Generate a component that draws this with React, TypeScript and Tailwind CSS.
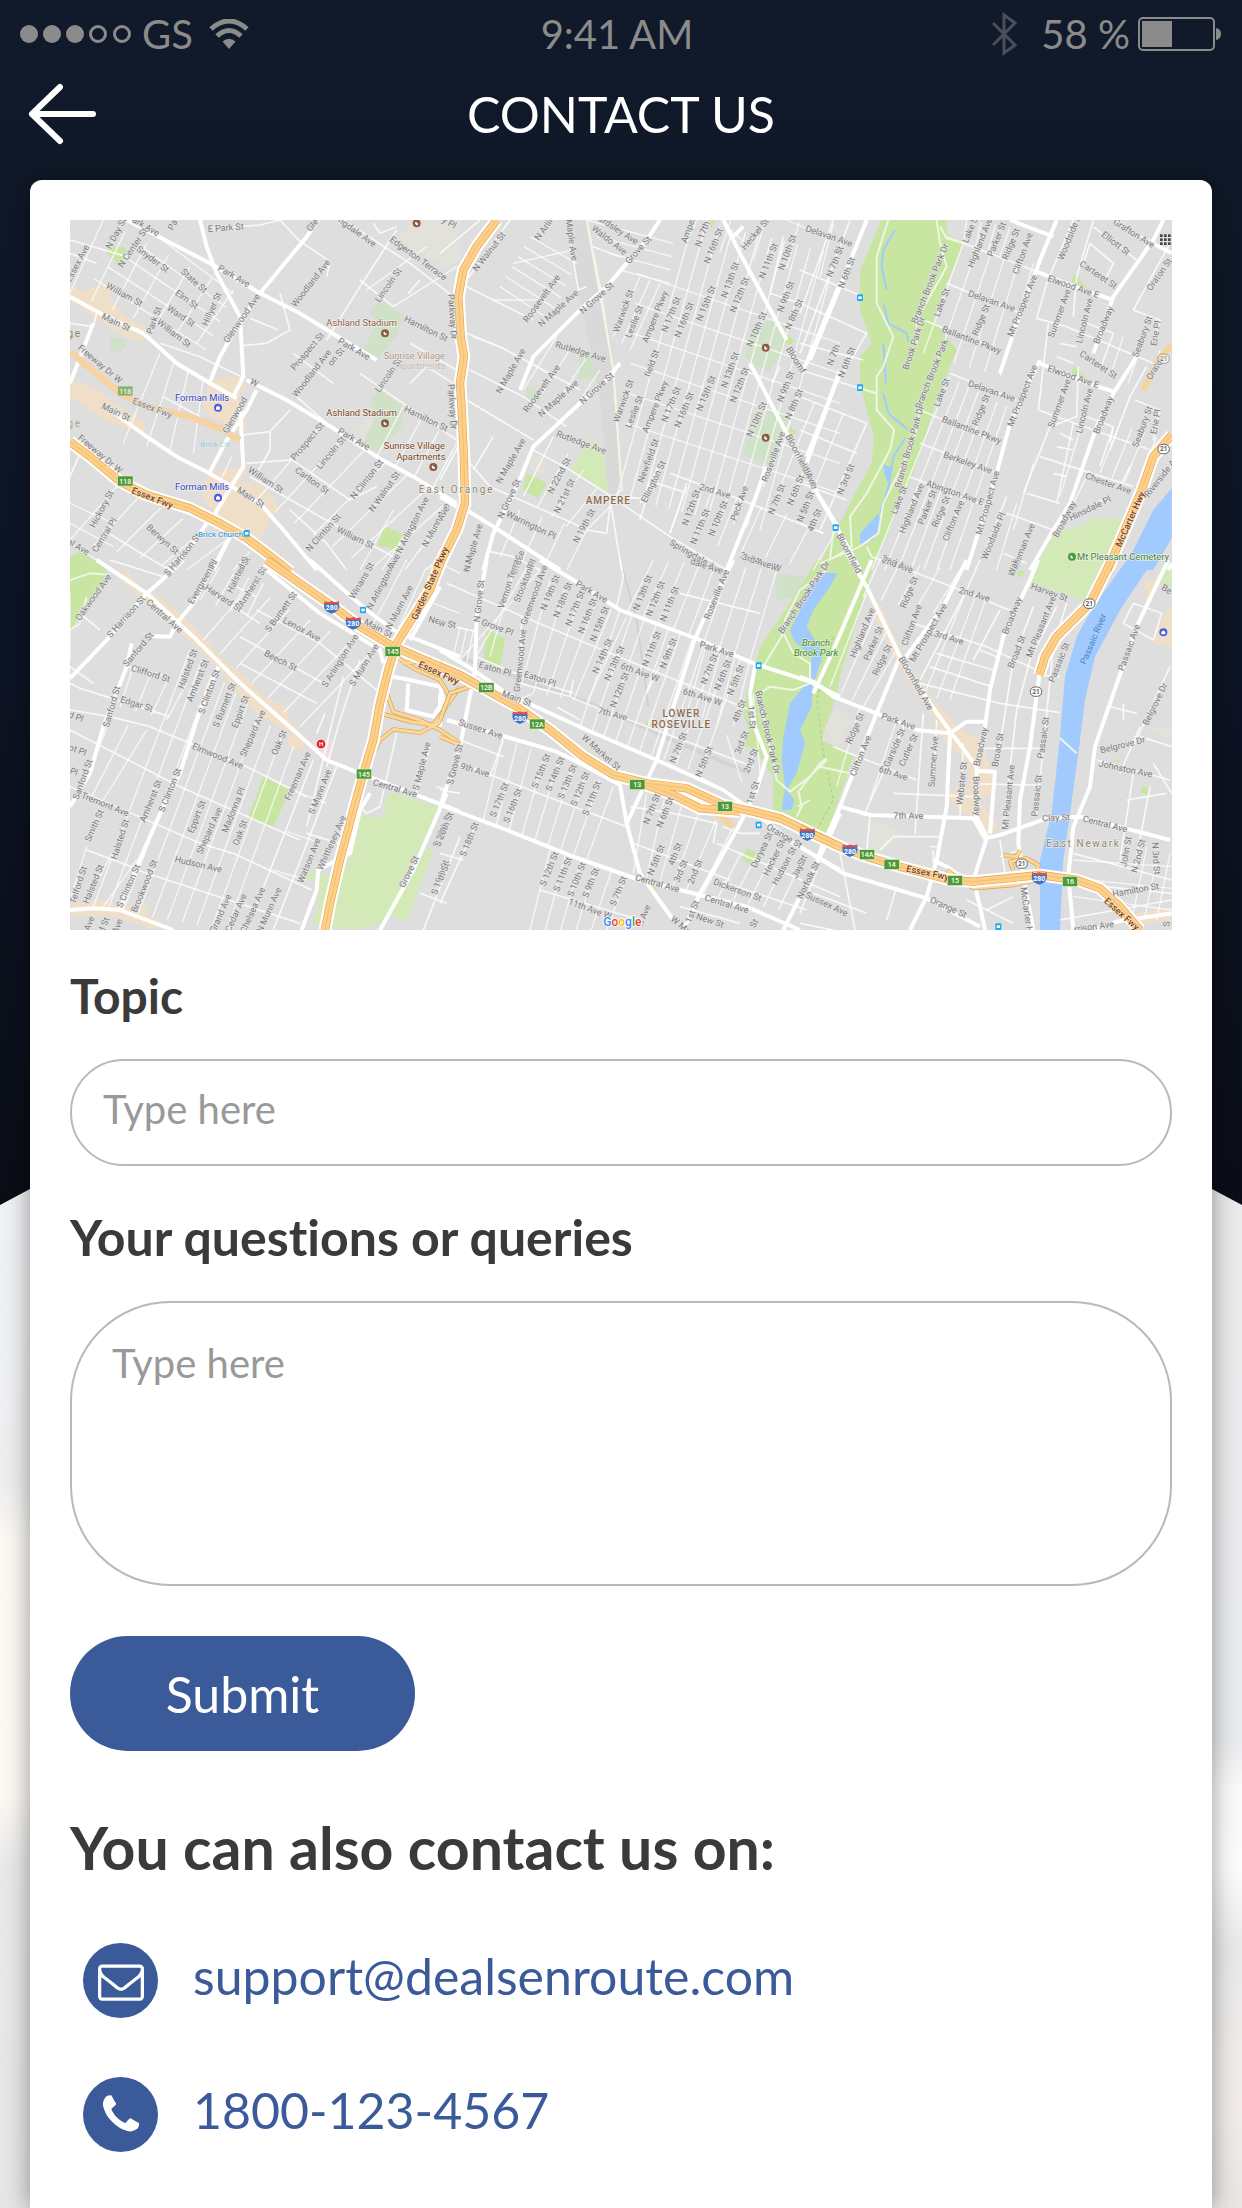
import React from "react";

type Tile = {
  at: [number, number];
  park?: string[];
  lawn?: string[];
  pale?: string[];
  sand?: string[];
  grey?: string[];
  water?: string[];
  stream?: string[];
  path?: string[];
  minor?: string[];
  grids?: number[][];
  major?: string[];
  ramp?: string[];
  faintHighway?: string[];
  highway?: string[];
  streets?: string;
};

const TILES: Tile[] = [
  {
    at: [-30, -30],
    park: ["145,112 195,112 200,130 180,165 140,130", "975,947 1032,975 1010,1030 985,1010 950,1010", "30,1040 60,1025 150,1080 30,1080"],
    pale: ["960,268 1035,320 1000,390 950,450 905,430 935,370 950,340 930,310", "955,538 1035,595 1025,650 950,725 905,705 935,645 950,610 930,580", "155,380 205,390 180,432 150,415"],
    grey: ["1060,30 1200,30 1200,150 1160,175 1010,90", "880,640 930,620 940,650 905,705 880,690"],
    sand: [
      "30,220 60,245 130,225 155,245 150,270 170,290 200,320 240,345 270,365 250,395 200,380 150,350 90,315 30,270",
      "440,785 500,780 560,770 540,820 600,820 660,890 600,985 555,970 470,915 425,860",
      "430,600 450,505 555,500 555,540 530,560 555,600 555,670 500,650",
      "30,510 100,530 180,590 260,640 250,670 150,640 30,560",
    ],
    minor: [
      "660,30 715,90 810,155 800,200", "450,55 600,45 660,30", "545,407 620,400 690,360", "570,325 655,360", "850,30 1050,160 1180,260",
      "1010,60 900,230 800,390", "1080,210 1045,250", "900,210 1000,290", "820,520 700,430", "545,675 630,665 690,600", "630,665 630,720 590,790",
      "690,745 870,870 950,830", "570,800 780,920 1000,1040", "560,760 690,750", "30,130 110,160", "30,90 200,140", "660,250 690,360", "30,800 60,730",
      "710,560 800,640", "900,490 1000,560 1190,690", "1190,480 1050,400", "300,400 420,440 545,500", "310,560 420,620", "130,960 260,1040 330,1080",
      "690,900 800,1000 860,1080", "940,40 960,70 1010,50", "1050,520 1100,470 1180,520", "30,340 100,350 110,310",
    ],
    grids: [
      [130, 30, 520, 240, 30, 250, 410, 400, 7], [100, 205, 280, 70, 440, 420, 520, 250, 5], [1190, 170, 1100, 110, 1000, 290, 920, 240, 2],
      [790, 640, 1170, 870, 590, 870, 930, 1080, 7], [170, 830, 500, 990, 30, 990, 380, 1080, 6], [300, 430, 430, 500, 190, 700, 400, 730, 4],
      [1030, 590, 1190, 700, 950, 740, 1120, 830, 4], [480, 720, 550, 760, 450, 790, 520, 820, 3], [30, 880, 30, 1000, 160, 940, 160, 1080, 3],
      [500, 990, 640, 1060, 450, 1080, 590, 1080, 3], [1000, 900, 1180, 1000, 900, 1080, 1100, 1080, 4],
    ],
    major: [
      "200,30 450,160 600,250 720,310 850,390 950,450", "420,30 440,110 470,190 540,320 550,500 520,560", "775,30 740,80 600,250 530,350 480,440 450,515",
      "30,260 130,315 250,370 350,460 450,520 530,565", "560,510 680,570 820,655 950,740 1060,800 1190,880", "540,590 550,770 510,835 460,920",
      "590,540 560,600 500,690 450,785", "150,600 260,680 350,740 440,785 600,880 670,960 770,1080", "440,940 400,1000 320,1080", "510,980 460,1080", "100,340 30,520",
    ],
    faintHighway: ["30,425 90,475 180,550 260,590 390,620 480,655 540,690"],
    highway: ["30,695 90,740 180,815 260,855 390,895 480,940 560,985 640,1045 690,1085"],
    streets: `N Day St 168 70 -62;Park Ave 250 45 30;Pa 338 45 -62;E Park St 497 53 -4;N Center St 218 113 -56;Snyder St 278 148 37;State St 402 212 42;Essex Ave 52 160 -62;William St 193 254 29;Elm St 380 268 36;Ward St 363 318 34;Hillyer St 455 297 -66;Main St 168 337 25;Park St 282 331 -70;William St 342 370 38;Park Ave 522 198 30;Glenwood Ave 545 325 -55;Woodland Ave 752 220 -52;Lincoln St 985 225 -55;Edgerton Terrace 1075 145 36;ngdale Ave 892 66 36;Gle 757 45 -50;Parkway Dr 1178 320 86;Hamilton St 1098 356 26;Park Ave 882 417 30;Prospect St 742 424 -50;Woodland Ave 755 490 -52;Lincoln St 985 495 -55;Freeway Dr W 120 462 40;Essex Fwy 277 594 21;Main St 168 606 25;Glenwood 525 615 -60;Parkway Dr 1175 590 86;Hamilton St 1098 626 26;Park Ave 882 687 30;Prospect St 742 694 -50;Lincoln St 813 728 -50;Freeway Dr W 120 732 40;Carlton St 756 812 36;William St 617 810 33;Main St 572 862 32;N Clinton St 920 808 -52;N Walnut St 973 845 -55;Hickory St 125 897 -62;Central Pl 133 975 -58;Berwyn St 308 988 42;S Harrison St 368 1035 -52;N Clinton St 790 968 -48;William St 886 983 26;N Arlington Ave 1057 945 -63;N Munn Ave 1127 945 -62;al Ave 55 1010 30;Pl 457 1066 -60;d St 552 1062 -60;Ave 998 1058 -62;W 583 518 30;on St 828 440 -50`,
  },
  {
    at: [1110, -30],
    park: ["260,790 320,820 295,865 250,840", "805,35 825,30 815,55", "1045,375 1065,395 1050,405 1035,395", "1040,645 1070,665 1055,680", "1090,785 1110,810 1085,805"],
    lawn: ["455,690 490,710 505,850 390,780"],
    pale: ["260,530 310,550 290,590 255,570", "420,430 490,440 480,500 415,510", "1010,330 1045,350 1040,400 985,490 915,440 935,345", "1005,600 1040,610 1035,660 985,765 910,735 935,610"],
    grey: ["0,60 50,110 20,160 0,170", "280,730 320,750 310,790 270,780"],
    path: ["440,30 520,480 545,840"],
    minor: [
      "440,30 480,230 520,480 545,840 510,870 545,1080", "440,230 415,240 380,30", "80,230 160,270 280,330", "210,30 80,210", "80,370 180,410 420,540",
      "90,480 250,560 380,650", "280,720 390,780 500,850 690,980 860,1080", "690,790 880,860 1150,970", "650,820 730,845", "90,760 150,830 400,940 440,960",
      "80,570 280,690", "160,680 100,780", "0,130 120,30", "545,860 600,865 650,820", "440,960 500,970 510,890", "690,970 740,830", "600,880 660,760", "600,930 640,800",
      "150,1025 220,1040 300,1080", "990,250 1030,80", "995,520 1020,470", "990,250 1080,280", "460,110 540,140", "0,810 60,700",
    ],
    grids: [
      [760, 30, 1190, 130, 530, 860, 960, 960, 12], [770, 30, 1180, 40, 740, 100, 1140, 200, 5], [590, 190, 560, 640, 1200, 400, 1200, 850, 6],
      [270, 80, 180, 230, 410, 160, 330, 330, 6], [400, 120, 200, 420, 220, 160, 100, 380, 3], [440, 30, 540, 180, 700, 100, 690, 220, 4],
      [350, 380, 480, 480, 250, 540, 400, 600, 4], [340, 680, 520, 880, 250, 860, 420, 980, 5], [740, 820, 1190, 960, 690, 970, 1120, 1080, 7],
      [600, 200, 660, 220, 520, 380, 570, 420, 3], [870, 60, 1040, 30, 930, 110, 1180, 90, 2], [180, 1040, 380, 1080, 240, 900, 440, 960, 4],
    ],
    major: [
      "660,30 620,90 500,230 430,290 280,440 240,540", "540,460 500,510 430,570 280,710 235,820 160,970 130,1080", "850,30 900,130 1040,390",
      "930,460 1040,670 1120,830 1190,945", "1200,220 1130,390 1090,480", "1200,480 1100,760", "980,770 940,880 860,1080", "80,900 160,950 360,1080", "0,860 50,890", "910,50 880,80",
    ],
    highway: ["170,30 110,110 70,180 55,260 62,380 72,440 60,520 65,600 72,750 75,880 50,960 -10,1080"],
    streets: `y Pl 28 38 30;N Walnut St 147 125 -52;N Arlin 313 55 -55;Maple Ave 395 90 82;ardsley Ave 535 60 33;Waldo Ave 508 90 38;Grove St 595 120 -48;Amper 745 60 -70;N 17th 787 72 -70;N 16th St 820 108 -68;Heckel St 945 72 -50;N 11th St 985 153 -68;N 10th St 1042 127 -70;Delavan A 1155 72 17;N 7th St 1182 155 -70;N 13th St 870 210 -70;N 12th St 898 255 -68;Roosevelt Ave 305 265 -54;N Maple Ave 355 295 -42;N Grove St 470 264 -42;Warwick St 550 303 -70;Leslie St 583 335 -68;Ampere Pkwy 645 320 -68;N 17th St 693 313 -68;N 16th St 732 330 -68;N 15th St 798 280 -68;N 9th St 1037 260 -68;N 8th St 1062 313 -66;N 10th St 950 358 -66;Parkway Dr 38 320 86;Rutledge Ave 422 425 17;N Maple Ave 212 483 -60;Roosevelt Ave 305 535 -54;N Maple Ave 355 565 -42;N Grove St 470 535 -42;Warwick St 550 573 -70;Leslie St 583 605 -68;Ampere Pkwy 645 590 -68;N 17th St 693 583 -68;N 16th St 732 600 -68;N 15th St 798 550 -68;N 13th St 870 480 -70;N 12th St 898 525 -68;N 9th St 1037 530 -68;N 8th St 1062 583 -66;N 10th St 950 628 -66;field St 635 460 -70;Bloomf 1068 450 58;Parkway Dr 38 590 86;Rutledge Ave 424 697 20;N Maple Ave 212 753 -60;N 22nd St 357 797 -62;N 21st St 373 858 -64;N Grove St 207 866 -65;Newfield St 625 752 -70;Ellington St 640 815 -64;Roseville Ave 1000 740 -70;Bloomfield Ave 1085 755 63;2nd Ave 825 843 17;N 12th St 753 893 -70;N 11th St 780 950 -68;N 10th St 834 925 -68;Peck Ave 898 880 -70;N 7th St 1010 868 -68;N 6th St 1067 840 -68;N 5th St 1094 890 -68;4th St 1125 930 -68;N 19th St 432 948 -62;Warrington Pl 273 945 26;Springdale Ave 768 1040 30;3rd Ave W 958 1055 20;N Maple Ave 98 1015 -74;Terrace 230 1065 -70;Pl 272 1066 -70;Ave 10 910 -62`,
  },
  {
    at: [2190, -30],
    park: [
      "245,30 180,180 180,300 215,400 180,440 180,520 200,600 222,680 215,760 160,860 50,1080 215,1080 340,790 410,570 470,420 400,330 440,220 490,100 440,70 440,30",
      "820,190 870,240 815,215", "820,465 870,515 815,490", "500,1080 505,1050 515,1080", "5,785 25,800 5,810",
    ],
    lawn: ["980,930 880,925 830,955 765,965 700,1080 910,1080"],
    water: ["1115,835 1060,900 970,1080 1060,1080 1115,985", "180,970 235,910 245,940 220,990 180,1002", "250,765 275,770 265,820 252,790"],
    stream: ["285,60 250,120 245,170 260,240", "250,280 265,340 320,370 325,395", "250,400 258,520", "250,550 265,610 325,660", "315,685 280,740 268,820 240,910"],
    path: [
      "265,30 230,140 230,280 280,380 250,470 230,500 230,600 283,660 270,720 200,850 150,920 155,1010 90,1050", "410,30 420,100 440,170 350,330 350,400",
      "360,590 345,680 320,740 250,880 235,970 180,1010 60,1060", "420,50 440,85 490,100", "100,960 90,1050",
    ],
    minor: [
      "440,80 710,185", "440,220 660,310", "370,330 600,420", "450,490 650,570", "360,600 600,700", "360,700 590,790", "330,800 560,890", "880,30 830,200 820,320",
      "820,30 740,220 710,325 800,350 1060,460", "715,600 880,660 1080,730", "850,160 870,100 940,160 910,220", "880,50 1010,150", "950,30 1040,90", "750,650 670,850",
      "820,640 770,880", "680,850 780,880", "720,740 1000,830", "620,910 760,960", "1000,300 1080,330 1060,400", "940,370 900,480", "1005,570 1080,600 1060,690",
      "940,650 900,770", "745,340 715,600", "835,470 830,620 750,650", "150,30 0,430", "100,30 0,310", "860,340 940,370", "860,620 940,650 930,700",
      "0,180 190,260", "0,280 200,370 130,490", "0,400 190,450", "0,480 230,550", "0,560 200,640 60,960", "0,660 170,730", "0,820 140,870", "0,940 70,970",
      "990,770 960,830", "780,400 830,410", "770,440 820,460", "780,670 820,690", "770,710 820,720", "760,790 800,800", "860,900 920,860", "610,1030 680,1060",
      "620,860 560,1010", "1040,470 990,560 930,720", "1110,100 1000,300", "200,1010 215,1040 330,1080",
    ],
    grids: [
      [490, 100, 700, 160, 370, 430, 600, 500, 6], [450, 500, 620, 590, 215, 1080, 450, 1080, 7], [0, 560, 130, 610, -110, 830, 20, 890, 4],
      [970, 380, 1080, 420, 930, 500, 1040, 540, 3], [960, 640, 1070, 680, 900, 790, 1010, 830, 4], [500, 30, 630, 50, 490, 100, 600, 140, 4],
      [700, 760, 650, 880, 640, 960, 590, 1080, 2], [840, 660, 870, 780, 780, 860, 820, 880, 2],
    ],
    major: [
      "770,30 720,150 640,370 600,490", "720,450 630,640 590,790 500,1080", "1090,30 1060,90 940,260 880,430", "1010,440 940,550 890,650 810,880 760,960 690,1080",
      "630,30 760,80", "710,185 850,240 940,270", "720,460 850,515 940,545", "1040,90 1115,130", "0,745 40,830 110,950 180,1080", "200,30 120,230 30,450", "120,490 20,740", "1115,1060 1105,1080",
    ],
    faintHighway: ["1115,405 1075,450 1030,540"],
    highway: ["1115,675 1060,740 1025,840 970,970 922,1080"],
    streets: `Delavan Ave 87 78 19;N 7th St 105 155 -68;N 6th St 140 188 -68;Lake S 510 60 -68;Highland Ave 540 98 -68;Parker St 590 88 -68;Ridge St 633 102 -68;Clifton Ave 668 130 -70;Woodside A 808 82 -68;Elliott St 947 100 38;Grafton Ave 1002 70 32;Oraton St 1078 193 -55;Carteret St 895 194 34;Elwood Ave E 820 230 19;Branch Brook Park Dr 390 220 -68;Lake St 425 277 -68;Delavan Ave 575 273 19;Ridge St 543 330 -68;Mt Prospect Ave 667 287 -68;Summer Ave 778 310 -70;Lincoln Ave 853 332 -76;Broadway 910 345 -68;Seabury St 1027 380 -70;Erie Pl 1067 370 -80;Ballantine Pkwy 515 390 21;Brook Park Dr 342 400 -72;N 7th 100 435 -70;N 6th St 140 457 -68;Branch Brook Park 395 492 -68;Lake St 425 547 -68;Delavan Ave 575 543 19;Ridge St 543 600 -68;Mt Prospect Ave 667 557 -68;Elwood Ave E 820 500 19;Carteret St 895 464 34;Summer Ave 778 580 -70;Lincoln Ave 853 602 -76;Broadway 910 615 -68;Seabury St 1027 650 -70;Erie Pl 1067 635 -80;Ballantine Pkwy 515 660 21;Branch Brook Park Dr 328 710 -74;Berkeley Ave 503 758 19;Chester Ave 925 820 19;Riverside A 1080 805 -52;Abington Ave E 465 848 19;Mt Prospect Ave 563 878 -74;Lake St 297 870 -68;Highland Ave 335 895 -68;Parker St 382 892 -68;Ridge St 423 905 -66;Clifton Ave 460 932 -68;Hinsdale Pl 870 895 -26;Broadway 793 928 -62;Woodside Pl 580 978 -68;Wakeman Ave 665 1020 -68;2nd Ave 292 1060 21;N 3rd St 137 808 -68;field Ave 20 782 62;N 5th St 17 890 -68;4th St 43 930 -68;Bloomfield 147 1030 62;Orator 1065 475 -58`,
  },
  {
    at: [-30, 1020],
    park: ["30,0 100,0 150,45 30,210", "610,650 690,690 640,800 565,770"],
    lawn: ["985,695 1140,740 970,1090 880,1110 755,1090 775,1040 775,950 725,965 750,930 810,950 860,920 900,765 965,775", "1100,855 1120,870 1040,1085 990,1065"],
    sand: [
      "160,40 200,35 250,90 300,110 370,170 440,240 480,290 560,350 610,410 680,440 690,480 740,540 720,575 680,560 690,520 620,480 570,440 500,360 440,290 350,210 250,120",
      "30,1030 120,1020 180,1035 260,1040 270,1070 295,1080 290,1110 230,1090 170,1070 30,1065",
    ],
    path: ["30,60 90,40 150,45", "80,110 60,190 30,210"],
    minor: [
      "590,150 780,250 950,390", "540,230 800,375", "440,90 600,190", "540,310 770,430", "150,0 310,50", "760,600 560,1110", "830,620 640,1110", "30,370 60,385 330,470",
      "30,450 150,470 270,500 560,620 740,710", "30,510 360,680 720,840", "30,320 100,370", "30,680 420,850 520,880 755,990", "80,870 240,930", "230,930 720,1090",
      "1010,520 960,740 920,760 900,740", "1110,560 1070,700", "850,350 740,800", "200,320 330,350", "60,160 120,210", "1130,680 1160,690", "740,820 870,860",
      "1080,1000 1160,1030", "1200,830 1090,1110", "590,110 530,80", "900,300 840,480 800,620", "795,460 770,520",
    ],
    grids: [
      [570, 80, 930, 280, 430, 240, 720, 500, 7], [390, 270, 700, 560, 100, 1040, 500, 1110, 10], [150, 480, 260, 510, 60, 700, 130, 720, 3],
      [30, 100, 200, 200, 30, 300, 60, 380, 1], [480, 20, 610, 70, 420, 120, 560, 170, 4], [1040, 0, 1100, 20, 930, 210, 1000, 240, 2],
      [220, 320, 380, 370, 180, 440, 320, 480, 4], [80, 860, 230, 900, 30, 1020, 130, 1040, 3], [720, 700, 640, 930, 800, 730, 740, 960, 3],
      [1120, 0, 1120, 130, 1200, 40, 1200, 160, 2],
    ],
    major: [
      "110,0 260,100 400,230 530,360 700,510 800,600 900,640 1200,755", "370,0 350,20 250,110 150,230 30,355", "470,0 400,130 350,190 330,230 270,228", "215,250 200,320 130,500 90,640 30,740",
      "475,320 420,450 360,640 310,740 230,920 180,1050", "30,1050 100,1045 180,1050 340,1110", "750,0 840,80 920,150 1000,210 1200,290", "620,30 780,160 960,270 970,310",
      "930,700 900,750 870,880 775,930 770,990 725,1110", "1160,700 1060,930 960,1110", "1140,80 1050,240", "1000,350 1050,360 1140,380 1150,420 1120,470 1040,450 1045,370", "1000,320 970,440 900,690",
    ],
    ramp: ["1010,290 1060,325 1140,360 1170,410 1135,490 1080,518 1000,508 960,540 930,600", "960,460 1050,485 1120,495 1165,430 1200,380", "980,400 1000,455 1080,480 1140,510 1200,550", "1030,310 1120,300 1200,340"],
    highway: ["1145,0 1110,90 1010,250 985,330 960,430 940,540 910,640 880,750 840,900 810,1030 795,1110", "620,0 720,70 820,140 900,200 1000,260 1200,345"],
    streets: `Oakwood Ave 100 112 -54;S Har 338 18 -50;S Harrison St 198 170 -48;Central Ave 313 168 42;Evergreen Pl 428 65 -60;Halsted S 533 45 -64;Amherst St 577 80 -58;Harvard St 490 115 33;Sanford St 235 268 -50;S Burnett St 663 155 -54;Lenox Ave 725 208 28;Main St 955 205 28;N Arlington Ave 970 65 -62;N Munn Ave 1018 142 -62;New St 1148 186 12;Winans St 905 62 -60;Beech St 662 302 27;S Arlington Ave 840 302 -58;S Munn Ave 912 315 -58;Clifford St 272 341 17;Halsted St 383 327 -70;Amherst St 413 362 -68;S Clinton St 447 395 -70;Edgar St 230 432 17;S Burnett St 493 435 -68;Eppirt St 541 455 -70;Sanford St 155 440 -74;Shepard Ave 578 520 -66;Oak St 657 548 -66;Elmwood Ave 473 588 22;d Pl 48 470 20;ot Pl 53 570 20;Pl 42 635 20;Sanford St 68 658 -70;Freeman Ave 713 648 -66;S Munn Ave 780 695 -68;Central Ave 1005 685 16;S Maple Ave 1085 618 -76;S Grove St 1182 615 -76;S Clinton St 330 690 -68;Tremont Ave 135 733 22;Amherst St 272 723 -68;Madonna Pl 520 750 -68;Eppirt St 410 770 -68;Shepard Ave 448 812 -66;Oak St 540 818 -70;Smith St 103 797 -66;Halsted St 180 838 -72;Hudson Ave 415 913 13;Watson Ave 747 902 -68;Whittlesey Ave 815 848 -66;S 20th St 1147 810 -68;Grove St 1047 935 -64;S 19th St 1140 952 -70;Telford St 55 975 -72;Halsted St 100 972 -68;S Clinton St 205 978 -66;Brookwood St 253 978 -68;Grand Ave 482 1060 -66;Cedar Ave 528 1058 -66;Chelsea Ave 578 1050 -66;N Munn Ave 627 1050 -66;Ave 88 1090 -68;d St 132 1095 -68;Ave 172 1098 -68`,
  },
  {
    at: [1110, 1020],
    park: [
      "1130,0 1030,160 960,260 945,320 920,400 910,460 945,570 1000,650 1000,760 1030,780 1160,825 1240,590 1145,540 1190,400 1200,350 1305,0",
      "140,210 195,235 180,330 130,300", "905,900 920,865 955,880 940,915", "620,480 630,500 615,500", "925,510 965,570 915,560", "620,965 650,985 640,1000",
    ],
    pale: ["1010,40 1095,50 1060,110 1010,120"],
    sand: ["725,655 775,680 740,700"],
    water: [
      "1110,80 1150,38 1192,40 1170,80 1120,150 1100,200 1150,280 1125,360 1110,350 1115,290 1060,240 1050,210 1080,150",
      "1100,370 1118,370 1115,440 1080,510 1095,550 1070,640 1040,690 1063,720 1055,750 1025,750 1035,680 1025,600 1030,530 1050,430",
    ],
    path: [
      "1160,30 1080,90 1035,180 1030,220 1060,280 1110,310 1110,365", "960,400 980,520 1010,660 1050,695 1110,650 1160,600", "960,400 990,380 1060,390 1110,370", "1075,690 1085,740 1070,770", "1030,220 970,320", "1075,740 1110,720",
    ],
    minor: [
      "20,70 250,170 560,300 930,450", "240,370 390,410 435,430 940,620", "720,100 960,160", "540,0 550,50 530,140", "40,200 110,215", "60,540 190,590", "60,610 560,800",
      "570,740 700,760 830,790 820,850", "580,850 870,960", "300,990 600,1080", "110,790 0,1030", "830,850 1200,1010", "830,960 1100,1050", "190,540 150,650", "350,440 420,480",
      "0,690 60,700", "0,880 70,900", "720,1040 900,1090", "245,170 240,380", "110,290 250,350 400,400", "960,820 900,820 850,800", "700,230 620,400", "390,410 400,360",
    ],
    grids: [
      [540, 150, 900, 300, 420, 500, 780, 640, 11], [330, 60, 560, 170, 240, 390, 440, 430, 6], [640, 0, 1010, 30, 560, 160, 930, 300, 9], [190, 530, 520, 680, 130, 780, 440, 900, 9],
      [620, 700, 880, 800, 580, 940, 780, 1000, 6], [330, 870, 560, 950, 270, 1110, 500, 1110, 6], [860, 870, 1130, 910, 790, 1000, 1060, 1060, 7], [230, 0, 300, 30, 150, 290, 60, 300, 3],
      [280, 400, 900, 680, 230, 420, 850, 720, 1], [780, 650, 940, 400, 850, 690, 960, 640, 3], [60, 200, 100, 210, 40, 290, 80, 310, 3], [800, 250, 930, 300, 740, 460, 880, 500, 4],
    ],
    major: [
      "140,0 110,170 105,330 60,560 0,740", "300,0 400,60 540,150 780,240 940,310 1110,365 1200,410", "880,0 790,180 760,250 700,440 650,600 560,790",
      "0,270 100,330 200,400 440,510 650,600 850,690 960,770 1060,850 1200,930", "20,480 180,525 350,575 440,620 540,675 560,790 600,940 700,1080",
      "0,735 200,810 400,890 600,960 780,1005 920,1040 1080,1110", "945,320 930,400 940,490 980,590 950,690 890,810 780,1000 730,1110", "1200,760 1150,870 1090,990 1030,1110", "0,500 0,400",
    ],
    ramp: ["0,480 30,400 90,380 140,390", "0,530 60,555", "60,350 100,355 140,385"],
    faintHighway: ["620,665 740,710 830,760 880,800", "0,310 60,340"],
    highway: ["0,320 60,345 140,390 230,440 330,510 430,590 520,645 620,670 740,685 850,735 940,755 1020,775 1200,860", "620,675 700,705 780,745 900,755"],
    streets: `N M 85 10 -80;Vernon Terrac 208 65 -72;Stockton Pl 255 62 -68;Greenwood Ave 282 105 -70;N 19th St 330 98 -68;N 18th St 368 120 -68;N 17th St 405 145 -68;N 16th St 442 168 -68;N 15th St 478 192 -68;Park Ave 455 95 30;N 13th St 608 98 -68;N 12th St 646 116 -68;N 11th St 688 132 -68;Roseville Ave 830 103 -68;dale Ave 800 18 18;3rd Ave W 965 8 18;N Grove St 117 123 -84;w St 22 192 8;Grove Pl 172 202 20;Greenwood Ave 240 302 -84;Eaton Pl 165 327 16;Eaton Pl 300 357 18;N 14th St 487 288 -66;N 13th St 523 310 -66;N 11th St 634 267 -68;N 9th St 685 280 -68;Park Ave 830 268 17;6th Ave W 600 337 20;N 12th St 538 390 -68;N 7th St 808 327 -68;N 6th St 848 345 -68;N 5th St 887 360 -68;6th Ave W 787 411 18;Main St 230 415 20;7th Ave 518 462 14;4th St 897 453 -68;1st St 935 472 86;3rd St 905 547 -68;2nd St 932 602 -68;Branch Brook Park Dr 983 517 77;Sussex Ave 122 507 18;W Market St 483 577 42;9th Ave 105 630 17;S Grove St 45 613 -76;S 15th St 303 633 -68;S 14th St 345 642 -68;S 13th St 382 665 -68;S 12th St 420 687 -68;S 11th St 455 715 -68;S 17th St 178 720 -68;S 16th St 218 737 -68;N 7th St 715 563 -68;N 5th St 792 605 -68;N 7th St 635 747 -68;N 6th St 675 757 -68;1st St 938 698 -72;S 20th St 12 808 -68;S 18th St 88 838 -68;S 12th St 328 927 -68;S 11th St 368 943 -68;S 10th St 410 958 -68;S 9th St 452 968 -68;S 7th St 535 993 -68;N 5th St 648 900 -68;4th St 705 882 -68;3rd St 722 933 -68;2nd St 765 935 -68;Central Ave 652 970 16;Orange St 1033 828 30;Duryea St 965 870 -64;Hecker St 1002 893 -64;Hudson St 1032 918 -62;Jay St 1078 920 -64;Norfolk St 1103 962 -62;Dickerson St 892 990 20;Central Ave 860 1032 17;Sussex Av 1155 1030 24;New St 810 1082 18;1st St 757 1055 -68;11th Ave W 450 1047 20;n Ave 612 1065 -68;W Ma 722 1095 40;St 942 1090 -60;th St 10 935 -68;Branch Brook Park Dr 1092 112 -56`,
  },
  {
    at: [2190, 1020],
    park: ["655,30 675,35 665,55 650,45", "1025,680 1045,682 1045,705 1025,700", "945,598 958,600 955,615"],
    lawn: ["725,0 690,70 820,110 870,130 935,0", "1090,0 1115,0 1115,80 1075,70"],
    grey: ["75,500 110,440 160,480 110,565", "210,780 320,820 250,870 200,880", "1030,500 1115,500 1110,540"],
    sand: [
      "235,120 250,160 310,290 400,420 470,500 555,545 560,600 580,640 580,700 540,720 595,800 570,830 540,830 510,770 440,720 450,690 510,680 500,600 430,540 400,470 330,370 260,250 215,150",
      "1060,220 1115,130 1115,260 1060,250", "1030,60 1080,60 1040,140", "960,1070 1115,1040 1115,1080 980,1095",
    ],
    water: ["980,0 880,140 830,230 795,350 780,530 755,760 720,900 720,1110 780,1110 790,900 810,760 835,580 855,420 885,290 960,150 1060,0"],
    path: ["0,350 50,370", "0,690 60,610 80,595", "60,620 150,640", "780,535 830,580"],
    minor: [
      "250,0 480,90 640,155", "340,190 560,260 720,335", "410,280 580,330", "390,320 575,380", "360,370 600,430 780,458", "540,565 720,565", "540,672 720,675", "280,700 520,710",
      "700,140 640,300 590,620", "770,140 690,300 650,450 610,800", "800,130 760,260 740,460 710,760", "370,460 345,820", "410,480 400,680", "320,480 190,770", "490,550 480,770",
      "930,440 1010,460", "1020,500 960,640", "890,600 1110,660", "1000,640 960,900", "1050,680 1000,940", "1110,320 1000,560", "820,880 1115,960", "820,970 1115,1000", "780,1080 1115,1020",
      "1000,130 970,190 1060,240 1085,160 1000,130", "120,880 165,1110", "40,1000 200,1060", "290,980 260,1080", "500,1020 640,1090", "60,910 0,1060", "540,0 500,90 360,360", "600,150 520,300",
      "720,345 780,350", "120,750 60,860", "240,870 280,830 420,830", "210,770 200,870", "100,560 350,660", "600,890 660,870", "600,840 615,940", "400,910 400,870", "540,270 590,290",
      "0,1090 100,1110", "560,1050 640,1010", "1115,560 1020,530", "1060,610 1115,700", "970,430 970,480", "390,860 420,860", "980,720 1100,700",
    ],
    grids: [[200, 100, 290, 270, 90, 380, 190, 440, 4], [180, 440, 290, 480, 110, 680, 210, 720, 2], [500, 90, 560, 110, 370, 410, 450, 420, 3], [820, 900, 820, 1010, 1115, 920, 1115, 1050, 3], [1040, 860, 1110, 880, 1000, 1060, 1070, 1080, 3], [240, 0, 480, 30, 190, 110, 400, 160, 5]],
    major: [
      "140,-20 200,80 300,290 390,430 455,520 530,620", "215,0 100,270 40,400", "500,0 430,140 310,300", "300,290 230,460 190,560 120,740 80,830 50,900",
      "715,0 690,60 610,230 570,390 555,500 530,620 530,770 560,830", "450,520 440,740 410,900 380,1010 330,1110", "120,740 210,765 520,775 555,835 600,825 740,775 840,770 1110,840",
      "530,632 585,635 570,820", "560,835 520,960 540,1040 555,1110", "0,860 130,940 380,1015 540,1100", "1105,0 1010,200 930,430 885,560 870,680 820,800 805,950 820,1110",
      "400,900 440,920 500,960", "880,1110 950,1085 1115,1060", "718,345 690,560 660,720 655,850 670,950 700,1110", "0,350 50,370 100,410 230,460 350,510 450,520 500,485 560,485",
    ],
    ramp: ["660,870 650,890 610,885", "640,930 630,905 680,895 715,915 710,950", "440,930 520,985 640,975 710,960", "880,970 980,1040"],
    highway: ["0,805 130,865 200,890 300,920 450,960 520,965 720,945 830,960 900,985 960,1040 1020,1110", "935,0 870,130 770,230 735,290 718,345"],
    streets: `2nd Ave 293 15 20;Ridge St 327 97 -68;2nd Ave 523 103 17;Wak 640 22 -72;Harvey St 748 97 20;Broadway 636 167 -68;Highland Ave 187 218 -68;Parker St 220 250 -66;Ridge St 246 300 -64;Clifton Ave 335 195 -70;Mt Prospect Ave 385 218 -60;3rd Ave 447 233 17;Mt Pleasant Ave 723 200 -68;Broad St 650 275 -68;Passaic St 777 307 -68;Passaic Ave 987 263 -70;Bloomfield Ave 348 370 60;Park Ave 295 484 19;Ridge St 165 505 -66;Garside St 283 563 -66;Cutler St 325 570 -66;Clifton Ave 182 587 -68;6th Ave 280 640 18;Summer Ave 400 605 -86;Broadway 542 560 -78;Broad St 593 570 -80;Webster St 485 670 -84;Broadway 530 708 88;Mt Pleasant Ave 625 712 -84;Passaic St 730 533 -82;Passaic St 710 707 -84;Belgrove Dr 1065 432 -64;Belgrove Dr 968 555 -14;Johnston Ave 977 627 12;7th Ave 325 767 1;Clay St 768 773 -2;Central Ave 915 792 14;John St 978 875 -80;N 2nd St 1015 888 -76;N 3rd St 1068 895 86;Hamilton St 1007 990 -10;Orange St 445 1042 24;Norfolk St 25 960 -64;Sussex Ave 80 1032 25;McCarter H 680 1050 82;rrison Ave 882 1100 -8;St 5 905 -64;S 1100 1092 -84;Be 1100 88 30`,
  },
];

const HIGHWAY_NAMES = [
  ["Essex Fwy", 247, 834, 21], ["Garden State Pkwy", 1080, 1090, -66], ["Essex Fwy", 1106, 1359, 25], ["McCarter Hwy", 3181, 898, -66],
  ["Essex Fwy", 2573, 1959, 12], ["Essex Fwy", 3155, 2082, 42],
] as const;

const EXITS = [
  ["118", 166, 513, 0.6], ["118", 166, 783, 1], ["145", 968, 1294, 1], ["145", 882, 1662, 1], ["12B", 1249, 1403, 1], ["12A", 1402, 1512, 1],
  ["13", 1702, 1694, 1], ["13", 1965, 1759, 1], ["14A", 2391, 1904, 1], ["14", 2465, 1933, 1], ["15", 2655, 1982, 1], ["16", 3000, 1984, 1],
] as const;

const SHIELDS = [[785, 1161], [850, 1209], [1350, 1492], [2212, 1843], [2340, 1891], [2908, 1974]];
const ROUTE_21 = [[3281, 416], [3281, 687], [3058, 1151], [2898, 1415], [2855, 1931]];
const STATIONS = [[530, 940], [879, 1170], [2297, 923], [2370, 233], [2370, 503], [2066, 1337], [2066, 1815], [2785, 2120]];
const STADIUMS = [[945, 340], [945, 610], [2087, 383], [2087, 653], [1040, 10], [1090, 741]];
const SHOPS = [[444, 563], [444, 833], [3280, 1237]];

const PLACES = [
  ["Ashland Stadium", 875, 308, "#8d5f49", 28, 1], ["Ashland Stadium", 875, 578, "#7a4426", 28, 1], ["Sunrise Village", 1033, 408, "#a3785f", 28, 0.7],
  ["Apartments", 1053, 438, "#a3785f", 28, 0.35], ["Sunrise Village", 1033, 678, "#7a4426", 28, 1], ["Apartments", 1053, 710, "#7a4426", 28, 1],
  ["Forman Mills", 396, 532, "#3a41c8", 28, 1], ["Forman Mills", 396, 801, "#3a41c8", 28, 1], ["Brick Church", 452, 940, "#1295d8", 24, 1], ["Brick Ch", 435, 670, "#1295d8", 24, 0.35],
  ["Mt Pleasant Cemetery", 3159, 1010, "#3f8540", 28, 1],
] as const;

const DISTRICTS = [
  ["AMPERE", 1615, 842, "tracking-[3px]"], ["LOWER", 1834, 1480, "tracking-[3px]"], ["ROSEVILLE", 1834, 1515, "tracking-[3px]"],
] as const;

function Lines({ list, className, width, dash }: { list?: string[]; className: string; width: number; dash?: string }) {
  return (
    <>
      {list?.map((p, i) => (
        <polyline key={i} points={p} fill="none" className={className} strokeWidth={width} strokeLinejoin="round" strokeDasharray={dash} />
      ))}
    </>
  );
}

function Areas({ list, className }: { list?: string[]; className: string }) {
  return <>{list?.map((p, i) => <polygon key={i} points={p} className={className} />)}</>;
}

function Grid({ g }: { g: number[] }) {
  const [ax, ay, bx, by, cx, cy, dx, dy, n] = g;
  const d = Array.from({ length: n }, (_, i) => {
    const t = n > 1 ? i / (n - 1) : 0;
    return `M${ax + (bx - ax) * t} ${ay + (by - ay) * t}L${cx + (dx - cx) * t} ${cy + (dy - cy) * t}`;
  }).join("");
  return <path d={d} className="stroke-white" strokeWidth={4} strokeOpacity={0.75} fill="none" />;
}

function Layer({ draw }: { draw: (t: Tile) => React.ReactNode }) {
  return (
    <>
      {TILES.map((t, i) => (
        <g key={i} transform={`translate(${t.at[0]} ${t.at[1]})`}>
          {draw(t)}
        </g>
      ))}
    </>
  );
}

function StreetNames({ source }: { source: string }) {
  return (
    <>
      {source.split(";").map((entry, i) => {
        const words = entry.trim().split(" ");
        const [x, y, angle] = words.slice(-3).map(Number);
        return (
          <text
            key={i}
            transform={`translate(${x} ${y}) rotate(${angle})`}
            textAnchor="middle"
            dy={9}
            fontSize={27}
            className="fill-[#7c7c7c] stroke-[#e6e6e6]"
            strokeWidth={4}
            paintOrder="stroke"
          >
            {words.slice(0, -3).join(" ")}
          </text>
        );
      })}
    </>
  );
}

function CityMap() {
  return (
    <svg viewBox="0 0 3306 2130" role="img" aria-label="Map of East Orange and Newark" className="block h-auto w-full bg-[#dedede] font-['Roboto',sans-serif]">
      <Layer
        draw={(t) => (
          <>
            <Areas list={t.grey} className="fill-[#e2e2da]" />
            <Areas list={t.sand} className="fill-[#f0dfc8]" />
            <Areas list={t.pale} className="fill-[#cfe1c6]" />
            <Areas list={t.lawn} className="fill-[#d3eab8]" />
            <Areas list={t.park} className="fill-[#c8e6a1]" />
            <Areas list={t.water} className="fill-[#a1caff]" />
            <Lines list={t.stream} className="stroke-[#a1caff]" width={6} />
          </>
        )}
      />
      <polygon points="1490,0 1550,0 1630,400 1655,820 1615,820 1590,530 1525,210" className="fill-[#d9d9d9]" />
      <polyline points="1650,1020 1700,1200 1735,1460" className="stroke-[#cfcfcf]" strokeWidth={5} fill="none" />
      <polyline points="1110,1290 1360,1380 1560,1450 1830,1570 2040,1660" className="stroke-[#d4d4d4]" strokeWidth={12} fill="none" />
      <polyline points="2290,1250 2240,1440 2260,1600 2290,1740 2240,1830" className="stroke-[#aec69a]" strokeWidth={3} strokeDasharray="10 8" fill="none" />
      <polygon points="730,1560 795,1560 780,1620 730,1580" className="fill-[#f0dde4]" />
      <Layer
        draw={(t) => (
          <>
            <Lines list={t.minor} className="stroke-white/80" width={5} />
            {t.grids?.map((g, i) => <Grid key={i} g={g} />)}
            <Lines list={t.path} className="stroke-[#eef6e2]" width={6} />
          </>
        )}
      />
      <Layer draw={(t) => <Lines list={t.major} className="stroke-white" width={12} />} />
      <Layer
        draw={(t) => (
          <>
            <Lines list={t.ramp} className="stroke-[#d9a44f]" width={13} />
            <Lines list={t.ramp} className="stroke-[#fbd79a]" width={9} />
            <Lines list={t.faintHighway} className="stroke-[#f6d3a3]" width={20} />
            <Lines list={t.highway} className="stroke-white" width={38} />
          </>
        )}
      />
      <Layer
        draw={(t) => (
          <>
            <Lines list={t.highway} className="stroke-[#eaa54e]" width={25} />
            <Lines list={t.highway} className="stroke-[#fdd08a]" width={21} />
            <Lines list={t.highway} className="stroke-[#efb262]" width={2} />
          </>
        )}
      />
      <Layer draw={(t) => <StreetNames source={t.streets ?? ""} />} />

      {HIGHWAY_NAMES.map(([name, x, y, angle], i) => (
        <text key={i} transform={`translate(${x} ${y}) rotate(${angle})`} textAnchor="middle" dy={9} fontSize={28} strokeWidth={4} paintOrder="stroke" className="fill-[#7a4426] stroke-[#fde3bb] font-medium">
          {name}
        </text>
      ))}
      {EXITS.map(([name, x, y, opacity], i) => (
        <g key={i} opacity={opacity}>
          <rect x={x - 23} y={y - 15} width={46} height={30} className="fill-[#4d9a35] stroke-[#dcebd5]" strokeWidth={2} />
          <text x={x} y={y + 8} textAnchor="middle" fontSize={21} className="fill-white font-medium">{name}</text>
        </g>
      ))}
      {SHIELDS.map(([x, y], i) => (
        <g key={i} transform={`translate(${x} ${y})`}>
          <path d="M-22-12H22Q28 12 0 20Q-28 12-22-12Z" className="fill-[#3d74c6]" />
          <path d="M-22-18Q-11-12 0-18Q11-12 22-18V-9H-22Z" className="fill-[#d9534f]" />
          <text y={10} textAnchor="middle" fontSize={21} className="fill-white font-bold">280</text>
        </g>
      ))}
      {ROUTE_21.map(([x, y], i) => (
        <g key={i} opacity={i === 0 ? 0.5 : 1}>
          <rect x={x - 17} y={y - 14} width={34} height={28} rx={13} className="fill-white stroke-[#666666]" strokeWidth={3} />
          <text x={x} y={y + 7} textAnchor="middle" fontSize={20} className="fill-[#444444] font-medium">21</text>
        </g>
      ))}
      {STATIONS.map(([x, y], i) => (
        <g key={i} transform={`translate(${x} ${y})`}>
          <rect x={-9} y={-10} width={18} height={20} rx={3} className="fill-[#1eaaf1]" />
          <path d="M-5-4H5V4H-5Z" className="fill-white" />
        </g>
      ))}
      {STADIUMS.map(([x, y], i) => (
        <g key={i} transform={`translate(${x} ${y})`}>
          <circle r={12} className="fill-[#8d5a45]" />
          <path d="M-5-3L0-5V0H5Q6 6 0 6Q-5 5-5-3Z" className="fill-white" />
        </g>
      ))}
      {SHOPS.map(([x, y], i) => (
        <g key={i} transform={`translate(${x} ${y})`}>
          <circle r={12} className="fill-[#4a5ae8]" />
          <path d="M-6-1L0-6L6-1V6H-6Z" className="fill-white" />
        </g>
      ))}
      <circle cx={753} cy={1572} r={13} className="fill-[#e02020]" />
      <text x={753} y={1579} textAnchor="middle" fontSize={18} className="fill-white font-bold">H</text>
      <circle cx={3006} cy={1010} r={12} className="fill-[#4a9a3c]" />
      <path d="M3002 1004V1015H3011Z" className="fill-white" />

      {PLACES.map(([name, x, y, fill, size, opacity], i) => (
        <text key={i} x={x} y={y + 10} textAnchor="middle" fontSize={size} fill={fill} opacity={opacity} stroke="#f1f1ec" strokeWidth={4} paintOrder="stroke">
          {name}
        </text>
      ))}
      {DISTRICTS.map(([name, x, y, cls]) => (
        <text key={name} x={x} y={y + 10} textAnchor="middle" fontSize={30} strokeWidth={4} paintOrder="stroke" className={`fill-[#8b6a4c] stroke-[#eeeeee] font-medium ${cls}`}>
          {name}
        </text>
      ))}
      <text x={1160} y={819} textAnchor="middle" fontSize={30} strokeWidth={4} paintOrder="stroke" className="fill-[#94876a] stroke-[#eeeeee] tracking-[6px]">East Orange</text>
      <text x={3040} y={1881} textAnchor="middle" fontSize={30} strokeWidth={4} paintOrder="stroke" className="fill-[#94876a] stroke-[#eeeeee] tracking-[5px]">East Newark</text>
      <text x={14} y={351} textAnchor="middle" fontSize={30} className="fill-[#94876a] tracking-[5px]">ge</text>
      <text x={14} y={621} textAnchor="middle" fontSize={30} className="fill-[#b0a68e] tracking-[5px]">ge</text>
      <text x={2238} y={1277} textAnchor="middle" fontSize={28} strokeWidth={4} paintOrder="stroke" className="fill-[#3f8540] stroke-[#dff0c8] italic">Branch</text>
      <text x={2238} y={1308} textAnchor="middle" fontSize={28} strokeWidth={4} paintOrder="stroke" className="fill-[#3f8540] stroke-[#dff0c8] italic">Brook Park</text>
      <text transform="translate(3070 1257) rotate(-67)" textAnchor="middle" dy={9} fontSize={27} className="fill-[#4d82c0]">Passaic River</text>
      <text x={1657} y={2119} textAnchor="middle" fontSize={36} strokeWidth={5} paintOrder="stroke" className="stroke-white font-medium">
        <tspan className="fill-[#4285f4]">G</tspan><tspan className="fill-[#ea4335]">o</tspan><tspan className="fill-[#fbbc05]">o</tspan><tspan className="fill-[#4285f4]">g</tspan><tspan className="fill-[#34a853]">l</tspan><tspan className="fill-[#ea4335]">e</tspan>
      </text>
      {[0, 1, 2].map((r) => [0, 1, 2].map((c) => (
        <rect key={`${r}${c}`} x={3270 + c * 12} y={43 + r * 12} width={8} height={8} className="fill-[#444444]" />
      )))}
    </svg>
  );
}

function StatusBar() {
  return (
    <div className="grid h-[68px] grid-cols-3 items-center px-5 text-[40px] leading-none text-[#8b8b8b]">
      <div className="flex items-center">
        <svg viewBox="0 0 112 20" className="h-5 w-28" aria-hidden="true">
          <circle cx="9" cy="10" r="9" fill="currentColor" />
          <circle cx="32" cy="10" r="9" fill="currentColor" />
          <circle cx="55" cy="10" r="9" fill="currentColor" />
          <circle cx="78" cy="10" r="7.500" fill="none" stroke="currentColor" strokeWidth="3" />
          <circle cx="102" cy="10" r="7.500" fill="none" stroke="currentColor" strokeWidth="3" />
        </svg>
        <span className="ml-2.5">GS</span>
        <svg viewBox="0 0 40 30" className="ml-4 h-[30px] w-10" fill="none" stroke="currentColor" aria-hidden="true">
          <path d="M2 10Q20-6 38 10" strokeWidth="5" />
          <path d="M8 17Q20 6 32 17" strokeWidth="5" />
          <path d="M20 30L13.500 22.500Q20 17 26.500 22.500Z" fill="currentColor" stroke="none" />
        </svg>
      </div>
      <span className="mr-2 justify-self-center">9:41 AM</span>
      <div className="flex items-center justify-self-end">
        <svg viewBox="0 0 26 44" className="mr-6 h-11 w-[26px] text-[#4a4f59]" fill="none" stroke="currentColor" strokeWidth="3" aria-hidden="true">
          <path d="M2 11L24 33L13 41V3L24 11L2 33" />
        </svg>
        <span>58 %</span>
        <svg viewBox="0 0 84 36" className="ml-2 h-9 w-[84px]" aria-hidden="true">
          <rect x="1" y="2" width="75" height="32" rx="4" fill="none" stroke="currentColor" strokeWidth="2" />
          <rect x="4" y="5" width="30" height="26" fill="currentColor" />
          <path d="M78 12Q83 13 83 18Q83 23 78 24Z" fill="currentColor" />
        </svg>
      </div>
    </div>
  );
}

function EnvelopeIcon() {
  return (
    <svg viewBox="0 0 1792 1792" className="size-[46px]" fill="currentColor" aria-hidden="true">
      <path d="M1664 1504v-768q-32 36-69 66-268 206-426 338-51 43-83 67t-86.500 48.500-102.500 24.500h-2q-48 0-102.500-24.500t-86.500-48.500-83-67q-158-132-426-338-37-30-69-66v768q0 13 9.500 22.500t22.500 9.500h1472q13 0 22.500-9.500t9.500-22.500zm0-1051v-24.500l-.5-13-3-12.500-5.500-9-9-7.500-14-2.500h-1472q-13 0-22.500 9.500t-9.500 22.500q0 168 147 284 193 152 401 317 6 5 35 29.500t46 37.500 44.500 31.500 50.500 27.500 43 9h2q20 0 43-9t50.500-27.500 44.500-31.500 46-37.500 35-29.500q208-165 401-317 54-43 100.500-115.500t46.500-131.500zm128-37v1088q0 66-47 113t-113 47h-1472q-66 0-113-47t-47-113v-1088q0-66 47-113t113-47h1472q66 0 113 47t47 113z" />
    </svg>
  );
}

function PhoneIcon() {
  return (
    <svg viewBox="0 0 1792 1792" className="size-[46px]" fill="currentColor" aria-hidden="true">
      <path d="M1600 1240q0 27-10 70.500t-21 68.500q-21 50-122 106-94 51-186 51-27 0-53-3.500t-57.500-12.500-47-14.500-55.500-20.500-49-18q-98-35-175-83-127-79-264-216t-216-264q-48-77-83-175-3-9-18-49t-20.500-55.500-14.500-47-12.500-57.500-3.500-53q0-92 51-186 56-101 106-122 25-11 68.500-21t70.500-10q14 0 21 3 18 6 53 76 11 19 30 54t35 63.500 31 53.500q3 4 17.500 25t21.500 35.500 7 28.500q0 20-28.500 50t-62 55-62 53-28.500 46q0 9 5 22.500t8.500 20.500 14 24 11.500 19q76 137 174 235t235 174q2 1 19 11.500t24 14 20.500 8.500 22.500 5q18 0 46-28.500t53-62 55-62 50-28.500q14 0 28.500 7t35.500 21.500 25 17.500q25 15 53.500 31t63.500 35 54 30q70 35 76 53 3 7 3 21z" />
    </svg>
  );
}

function ContactLink({ href, icon, children }: { href: string; icon: React.ReactNode; children: React.ReactNode }) {
  return (
    <a href={href} className="flex items-center gap-[35px] text-[50px] leading-[60px] text-[#3a5a99]">
      <span className="flex size-[75px] shrink-0 items-center justify-center rounded-full bg-[#3a5a99] text-white">{icon}</span>
      <span className="pb-2.5">{children}</span>
    </a>
  );
}

export default function App() {
  return (
    <div className="relative isolate flex min-h-screen flex-col bg-linear-to-b from-[#111a2a] via-[#0d1424] via-30% to-[#0a0d16] to-55% font-['Lato',sans-serif] [font-variant-ligatures:none]">
      <div className="absolute inset-x-0 bottom-0 top-[1189px] -z-10 flex [clip-path:polygon(0_16px,30px_0,calc(100%-30px)_0,100%_16px,100%_100%,0_100%)]">
        <div className="flex-1 bg-[linear-gradient(#eff1f4,#eeeeef_29%,#fcf9f3_35%,#fbf7f1_60%,#e9e9e9_66%,#e5e5e5)]" />
        <div className="flex-1 bg-[linear-gradient(#ebebec,#e9eaec_54%,#fafafb_59%,#fbfbfc_67%,#e9e9ea_74%,#f1ece9_90%,#e8e6e5)]" />
      </div>

      <StatusBar />

      <header className="mb-5 grid h-[92px] grid-cols-[1fr_auto_1fr] items-center px-7 text-white">
        <button type="button" aria-label="Back" className="justify-self-start">
          <svg viewBox="0 0 70 62" className="h-[62px] w-[70px]" fill="none" stroke="currentColor" strokeWidth="6" strokeLinecap="round" strokeLinejoin="round">
            <path d="M32 4L4 31L32 58M4 31H65" />
          </svg>
        </button>
        <h1 className="text-[50px] leading-[60px]">CONTACT US</h1>
      </header>

      <main className="mx-[30px] flex-1 rounded-t-xl bg-white p-10 text-[#3a3a3a] shadow-[0_0_24px_rgba(0,0,0,0.4)]">
        <CityMap />

        <form onSubmit={(e) => e.preventDefault()}>
          <label htmlFor="topic" className="mt-9 block text-[48px] font-bold leading-[60px]">Topic</label>
          <input
            id="topic"
            type="text"
            placeholder="Type here"
            className="mt-[33px] block h-[107px] w-full rounded-full border-2 border-[#b9b9b9] px-[31px] pb-2 text-[40px] placeholder:text-[#999999]"
          />

          <label htmlFor="query" className="mt-[41px] block text-[50px] font-bold leading-[60px]">Your questions or queries</label>
          <textarea
            id="query"
            placeholder="Type here"
            className="mt-[34px] block h-[285px] w-full resize-none rounded-[100px] border-2 border-[#b9b9b9] px-10 pt-9 text-[40px] leading-[48px] placeholder:text-[#999999]"
          />

          <button type="submit" className="mt-[50px] block h-[115px] w-[345px] rounded-full bg-[#3a5a99] text-[50px] leading-[60px] text-white">
            Submit
          </button>
        </form>

        <h2 className="mt-[61px] text-[59px] font-bold leading-[72px]">You can also contact us on:</h2>
        <div className="mt-[59px] flex flex-col gap-[59px] pl-[13px]">
          <ContactLink href="mailto:support@dealsenroute.com" icon={<EnvelopeIcon />}>support@dealsenroute.com</ContactLink>
          <ContactLink href="tel:1800-123-4567" icon={<PhoneIcon />}>1800-123-4567</ContactLink>
        </div>
      </main>
    </div>
  );
}
